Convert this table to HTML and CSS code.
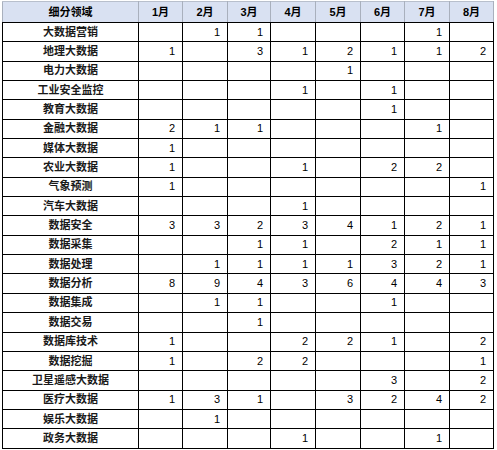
FILE: index.html
```html
<!DOCTYPE html>
<html lang="zh-CN">
<head>
<meta charset="utf-8">
<title>细分领域</title>
<link rel="stylesheet" href="styles.css">
</head>
<body>
<table class="grid">
  <colgroup>
    <col class="c-name"><col class="c44"><col class="c45"><col class="c43"><col class="c45"><col class="c45"><col class="c44"><col class="c45"><col class="c44">
  </colgroup>
  <thead>
    <tr class="head">
      <th>细分领域</th><th>1月</th><th>2月</th><th>3月</th><th>4月</th><th>5月</th><th>6月</th><th>7月</th><th>8月</th>
    </tr>
  </thead>
  <tbody>
    <tr><td class="name">大数据营销</td><td></td><td>1</td><td>1</td><td></td><td></td><td></td><td>1</td><td></td></tr>
    <tr><td class="name">地理大数据</td><td>1</td><td></td><td>3</td><td>1</td><td>2</td><td>1</td><td>1</td><td>2</td></tr>
    <tr><td class="name">电力大数据</td><td></td><td></td><td></td><td></td><td>1</td><td></td><td></td><td></td></tr>
    <tr><td class="name">工业安全监控</td><td></td><td></td><td></td><td>1</td><td></td><td>1</td><td></td><td></td></tr>
    <tr><td class="name">教育大数据</td><td></td><td></td><td></td><td></td><td></td><td>1</td><td></td><td></td></tr>
    <tr><td class="name">金融大数据</td><td>2</td><td>1</td><td>1</td><td></td><td></td><td></td><td>1</td><td></td></tr>
    <tr><td class="name">媒体大数据</td><td>1</td><td></td><td></td><td></td><td></td><td></td><td></td><td></td></tr>
    <tr><td class="name">农业大数据</td><td>1</td><td></td><td></td><td>1</td><td></td><td>2</td><td>2</td><td></td></tr>
    <tr><td class="name">气象预测</td><td>1</td><td></td><td></td><td></td><td></td><td></td><td></td><td>1</td></tr>
    <tr><td class="name">汽车大数据</td><td></td><td></td><td></td><td>1</td><td></td><td></td><td></td><td></td></tr>
    <tr><td class="name">数据安全</td><td>3</td><td>3</td><td>2</td><td>3</td><td>4</td><td>1</td><td>2</td><td>1</td></tr>
    <tr><td class="name">数据采集</td><td></td><td></td><td>1</td><td>1</td><td></td><td>2</td><td>1</td><td>1</td></tr>
    <tr><td class="name">数据处理</td><td></td><td>1</td><td>1</td><td>1</td><td>1</td><td>3</td><td>2</td><td>1</td></tr>
    <tr><td class="name">数据分析</td><td>8</td><td>9</td><td>4</td><td>3</td><td>6</td><td>4</td><td>4</td><td>3</td></tr>
    <tr><td class="name">数据集成</td><td></td><td>1</td><td>1</td><td></td><td></td><td>1</td><td></td><td></td></tr>
    <tr><td class="name">数据交易</td><td></td><td></td><td>1</td><td></td><td></td><td></td><td></td><td></td></tr>
    <tr><td class="name">数据库技术</td><td>1</td><td></td><td></td><td>2</td><td>2</td><td>1</td><td></td><td>2</td></tr>
    <tr><td class="name">数据挖掘</td><td>1</td><td></td><td>2</td><td>2</td><td></td><td></td><td></td><td>1</td></tr>
    <tr><td class="name">卫星遥感大数据</td><td></td><td></td><td></td><td></td><td></td><td>3</td><td></td><td>2</td></tr>
    <tr><td class="name">医疗大数据</td><td>1</td><td>3</td><td>1</td><td></td><td>3</td><td>2</td><td>4</td><td>2</td></tr>
    <tr><td class="name">娱乐大数据</td><td></td><td>1</td><td></td><td></td><td></td><td></td><td></td><td></td></tr>
    <tr><td class="name">政务大数据</td><td></td><td></td><td></td><td>1</td><td></td><td></td><td>1</td><td></td></tr>
  </tbody>
</table>
</body>
</html>
```
FILE: styles.css
```css
html, body {
  margin: 0;
  padding: 0;
  background: #ffffff;
}

.grid {
  margin: 1px 0 0 2px;
  border-collapse: collapse;
  table-layout: fixed;
  width: 492px;
  font-family: "Liberation Sans", "Noto Sans CJK SC", sans-serif;
  font-size: 11px;
  color: #000000;
}

.c-name { width: 136px; }
.c43 { width: 43px; }
.c44 { width: 44px; }
.c45 { width: 45px; }

.grid th,
.grid td {
  padding: 0 7px 0 0;
  border: 1px solid #000000;
  line-height: 13px;
  white-space: nowrap;
  overflow: hidden;
}

.head th {
  height: 20px;
  background: #d9e1f2;
  border-top-color: #b8bfcc;
  border-left-color: #a9b0bd;
  border-right-color: #a9b0bd;
  border-bottom-color: #000000;
  font-weight: bold;
  text-align: center;
  padding: 0;
}

.grid tbody tr {
  height: 19.35px;
}

.grid td {
  text-align: right;
}

.grid td.name {
  text-align: center;
  padding: 0;
  font-weight: bold;
  color: #1a1a1a;
}
```
